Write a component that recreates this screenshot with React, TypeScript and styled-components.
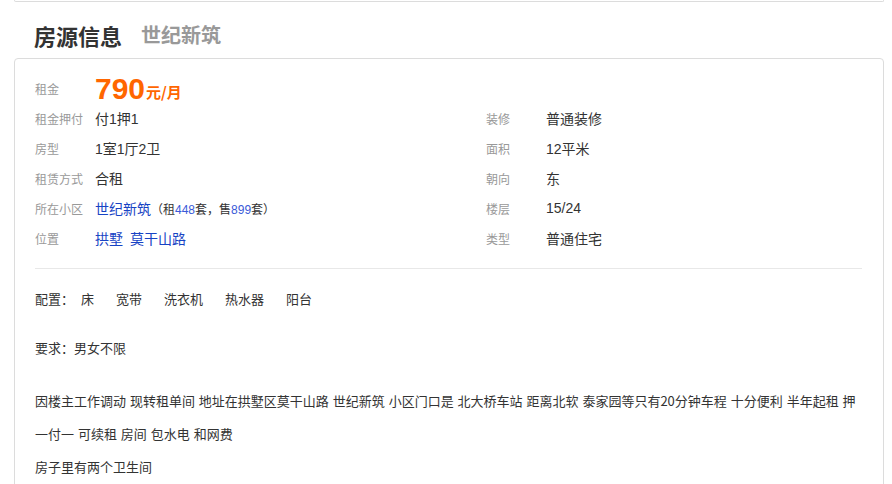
import React from "react";
import styled, { createGlobalStyle } from "styled-components";

const Global = createGlobalStyle`
  html, body { margin: 0; padding: 0; background: #fff; }
  body {
    font-family: "Liberation Sans", "Noto Sans CJK SC", sans-serif;
    color: #333;
  }
`;

const Page = styled.div`
  padding: 0 8px 0 14px;
  width: 892px;
  box-sizing: border-box;
`;

const PrevBoxEdge = styled.div`
  height: 1px;
  border: 1px solid #dcdcdc;
  border-top: none;
  border-radius: 0 0 4px 4px;
`;

const TitleBar = styled.div`
  height: 56px;
  box-sizing: border-box;
  padding: 10px 0 0 20px;
  display: flex;
  align-items: center;
  gap: 19px;
`;

const Title = styled.h2<{ $muted?: boolean }>`
  margin: 0;
  font-family: "Noto Sans CJK SC", sans-serif;
  font-weight: 700;
  font-size: ${(p) => (p.$muted ? "20px" : "22px")};
  line-height: 1;
  color: ${(p) => (p.$muted ? "#999" : "#333")};
`;

const Card = styled.div`
  border: 1px solid #dcdcdc;
  border-radius: 4px;
  padding: 14px 21px 4px 20px;
`;

const InfoGrid = styled.div`
  display: grid;
  grid-template-columns: 451px 1fr;
`;

const Column = styled.div`
  display: flex;
  flex-direction: column;
`;

const Item = styled.div`
  display: flex;
  align-items: center;
  height: 30px;
`;

const Label = styled.span`
  width: 60px;
  flex: none;
  font-family: "Noto Sans CJK SC", sans-serif;
  font-size: 12px;
  color: #999;
`;

const Value = styled.span`
  font-family: "Liberation Sans", "Noto Sans CJK SC", sans-serif;
  font-size: 14px;
  color: #333;
  white-space: nowrap;
`;

const PriceItem = styled(Item)`
  margin-top: 1px;
  height: 29px;
`;

const Price = styled.span`
  color: #ff6600;
  font-family: "Liberation Sans", sans-serif;
  font-weight: 700;
  font-size: 30px;
  line-height: 30px;
`;

const Unit = styled.span`
  color: #ff6600;
  font-family: "Noto Sans CJK SC", sans-serif;
  font-weight: 700;
  font-size: 15px;
  margin-left: 1px;
  position: relative;
  top: 3px;
`;

const Link = styled.a`
  color: #1743c4;
  text-decoration: none;
  font-family: "Liberation Sans", "Noto Sans CJK SC", sans-serif;
  & + & { margin-left: 7px; }
`;

const Count = styled.a`
  color: #3a5ad8;
  text-decoration: none;
  font-family: "Liberation Sans", sans-serif;
`;

const Note = styled.span`
  font-size: 12px;
  color: #333;
  font-family: "Noto Sans CJK SC", sans-serif;
`;

const Divider = styled.div`
  height: 1px;
  background: #e8e8e8;
  margin-top: 15px;
`;

const Line = styled.div<{ $top: number }>`
  margin-top: ${(p) => p.$top}px;
  height: 30px;
  display: flex;
  align-items: center;
  font-family: "Noto Sans CJK SC", sans-serif;
  font-size: 13px;
  color: #333;
`;

const Feature = styled.span`
  margin-right: 22px;
  &:first-of-type { margin-left: 7px; }
`;

const Description = styled.p`
  margin: 22px 0 0;
  font-family: "Noto Sans CJK SC", sans-serif;
  font-size: 13px;
  line-height: 33px;
  word-spacing: 1px;
  color: #333;
`;

const left: { label: string; value: React.ReactNode }[] = [
  { label: "租金押付", value: "付1押1" },
  { label: "房型", value: "1室1厅2卫" },
  { label: "租赁方式", value: "合租" },
  {
    label: "所在小区",
    value: (
      <>
        <Link href="#">世纪新筑</Link>
        <Note>
          （租<Count href="#">448</Count>套，售<Count href="#">899</Count>套）
        </Note>
      </>
    ),
  },
  {
    label: "位置",
    value: (
      <>
        <Link href="#">拱墅</Link>
        <Link href="#">莫干山路</Link>
      </>
    ),
  },
];

const right = [
  { label: "装修", value: "普通装修" },
  { label: "面积", value: "12平米" },
  { label: "朝向", value: "东" },
  { label: "楼层", value: "15/24" },
  { label: "类型", value: "普通住宅" },
];

const features = ["床", "宽带", "洗衣机", "热水器", "阳台"];

export default function App() {
  return (
    <Page>
      <Global />
      <PrevBoxEdge />
      <TitleBar>
        <Title>房源信息</Title>
        <Title $muted>世纪新筑</Title>
      </TitleBar>
      <Card>
        <PriceItem>
          <Label>租金</Label>
          <Price>790</Price>
          <Unit>元/月</Unit>
        </PriceItem>
        <InfoGrid>
          <Column>
            {left.map((r) => (
              <Item key={r.label}>
                <Label>{r.label}</Label>
                <Value>{r.value}</Value>
              </Item>
            ))}
          </Column>
          <Column>
            {right.map((r) => (
              <Item key={r.label}>
                <Label>{r.label}</Label>
                <Value>{r.value}</Value>
              </Item>
            ))}
          </Column>
        </InfoGrid>
        <Divider />
        <Line $top={14}>
          配置：
          {features.map((f) => (
            <Feature key={f}>{f}</Feature>
          ))}
        </Line>
        <Line $top={19}>要求：男女不限</Line>
        <Description>
          因楼主工作调动 现转租单间 地址在拱墅区莫干山路 世纪新筑 小区门口是 北大桥车站 距离北软 泰家园等只有20分钟车程 十分便利 半年起租 押一付一 可续租 房间 包水电 和网费
          <br />
          房子里有两个卫生间
        </Description>
      </Card>
    </Page>
  );
}
